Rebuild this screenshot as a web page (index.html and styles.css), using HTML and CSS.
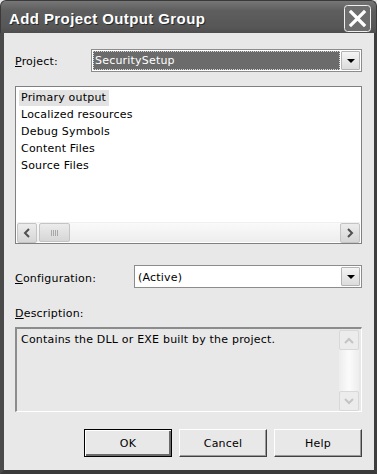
FILE: index.html
```html
<!DOCTYPE html>
<html lang="en">
<head>
    <meta charset="UTF-8">
    <title>Add Project Output Group</title>
    <link rel="stylesheet" href="styles.css">
</head>
<body>
    <div class="window">
        <!-- Заголовок окна -->
        <div class="titlebar">
            <span class="title">Add Project Output Group</span>
            <svg class="close" width="27" height="27" viewBox="0 0 27 27">
                <rect x="0.5" y="0.5" width="26" height="26" rx="3" fill="#6e6e6e" stroke="#f0f0f0"/>
                <path d="M7 7 L20 20 M20 7 L7 20" stroke="#fff" stroke-width="3.2" stroke-linecap="square"/>
            </svg>
        </div>

        <div class="frame">
            <!-- Проект -->
            <div class="row">
                <label class="lbl lbl-project"><u>P</u>roject:</label>
                <div class="combo combo-project">
                    <span class="combo-text selected">SecuritySetup</span>
                    <span class="drop"><span class="tri"></span></span>
                </div>
            </div>

            <!-- Список выходных групп -->
            <div class="listbox">
                <ul class="items">
                    <li><span class="hl">Primary output</span></li>
                    <li><span>Localized resources</span></li>
                    <li><span>Debug Symbols</span></li>
                    <li><span>Content Files</span></li>
                    <li><span>Source Files</span></li>
                </ul>
                <div class="hscroll">
                    <span class="sbtn">
                        <svg width="8" height="10" viewBox="0 0 8 10"><path d="M6 1 L2 5 L6 9" fill="none" stroke="#505050" stroke-width="2"/></svg>
                    </span>
                    <span class="thumb">
                        <svg width="7" height="6" viewBox="0 0 7 6"><path d="M0.5 0v6M2.5 0v6M4.5 0v6M6.5 0v6" stroke="#a8a8a8"/></svg>
                    </span>
                    <span class="track"></span>
                    <span class="sbtn">
                        <svg width="8" height="10" viewBox="0 0 8 10"><path d="M2 1 L6 5 L2 9" fill="none" stroke="#505050" stroke-width="2"/></svg>
                    </span>
                </div>
            </div>

            <!-- Конфигурация -->
            <div class="row row-config">
                <label class="lbl lbl-config"><u>C</u>onfiguration:</label>
                <div class="combo combo-config">
                    <span class="combo-text">(Active)</span>
                    <span class="drop"><span class="tri"></span></span>
                </div>
            </div>

            <!-- Описание -->
            <div class="lbl desc-label"><u>D</u>escription:</div>
            <div class="descbox">
                <div class="desc-text">Contains the DLL or EXE built by the project.</div>
                <div class="vscroll">
                    <span class="sbtn dis">
                        <svg width="10" height="7" viewBox="0 0 10 7"><path d="M1 6 L5 2 L9 6" fill="none" stroke="#c4c4c4" stroke-width="2"/></svg>
                    </span>
                    <span class="vtrack"></span>
                    <span class="sbtn dis">
                        <svg width="10" height="7" viewBox="0 0 10 7"><path d="M1 1 L5 5 L9 1" fill="none" stroke="#c4c4c4" stroke-width="2"/></svg>
                    </span>
                </div>
            </div>

            <!-- Кнопки -->
            <div class="buttons">
                <button class="btn default">OK</button>
                <button class="btn">Cancel</button>
                <button class="btn">Help</button>
            </div>
        </div>
    </div>
</body>
</html>
```
FILE: styles.css
```css
* {
    box-sizing: border-box;
}

body {
    margin: 0;
    background: #e8e8e8;
    font-family: "DejaVu Sans", sans-serif;
    font-size: 11px;
    letter-spacing: 0.2px;
    color: #000;
}

.window {
    width: 377px;
    height: 474px;
    display: flex;
    flex-direction: column;
}

.titlebar {
    height: 33px;
    display: flex;
    align-items: center;
    justify-content: space-between;
    padding: 0 5px 0 8px;
    background: linear-gradient(#767676, #5e5e5e 30%, #575757 80%, #4e4e4e);
    border-radius: 6px 6px 0 0;
    border: 1px solid #3a3a3a;
    border-bottom: none;
}

.title {
    font-family: "Liberation Sans", Arial, sans-serif;
    font-weight: bold;
    font-size: 15px;
    letter-spacing: 0.4px;
    color: #fff;
    text-shadow: 1px 1px 0 #2a2a2a;
    margin-top: 2px;
}

.close {
    display: block;
    margin-top: 2px;
}

.frame {
    flex: 1;
    display: flex;
    flex-direction: column;
    background: #e8e8e8;
    border-left: 4px solid #4a4a4a;
    border-right: 3px solid #3e3e3e;
    border-bottom: 4px solid #3a3a3a;
    padding: 16px 12px 0 11px;
}

.row {
    display: flex;
    align-items: center;
    height: 23px;
}

.lbl u {
    text-decoration: underline;
    text-underline-offset: 1px;
}

.lbl-project {
    width: 76px;
    padding-top: 2px;
}

.lbl-config {
    width: 119px;
    padding-top: 4px;
}

.combo {
    flex: 1;
    height: 23px;
    display: flex;
    align-items: center;
    background: #fff;
    border: 1px solid #8c8c8c;
    padding: 1px;
}

.combo-text {
    flex: 1;
    height: 19px;
    line-height: 19px;
    padding-left: 2px;
}

.combo-text.selected {
    background: #6b6b6b;
    color: #fff;
    outline: 1px dotted #d8d8d8;
    outline-offset: -1px;
    margin-right: 1px;
}

.combo-config .combo-text {
    padding-left: 2px;
    padding-top: 1px;
}

.drop {
    width: 19px;
    height: 19px;
    display: flex;
    align-items: center;
    justify-content: center;
    background: linear-gradient(#f4f4f4, #dcdcdc);
    border: 1px solid #b4b4b4;
    border-radius: 1px;
}

.tri {
    width: 0;
    height: 0;
    border-left: 4px solid transparent;
    border-right: 4px solid transparent;
    border-top: 4px solid #000;
    margin-top: 1px;
}

.listbox {
    margin-top: 14px;
    height: 158px;
    display: flex;
    flex-direction: column;
    background: #fff;
    border: 1px solid #808080;
    padding: 1px;
}

.items {
    flex: 1;
    list-style: none;
    margin: 0;
    padding: 1px 0 0 2px;
}

.items li {
    height: 17px;
    line-height: 17px;
}

.items span {
    display: inline-block;
    padding: 0 3px 0 2px;
    line-height: 16px;
}

.items .hl {
    background: #e2e2e2;
}

.hscroll {
    height: 20px;
    display: flex;
    background: linear-gradient(#fafafa, #ededed);
    border-top: 1px solid #f0f0f0;
}

.sbtn {
    width: 20px;
    height: 20px;
    display: flex;
    align-items: center;
    justify-content: center;
    background: linear-gradient(#ececec, #d6d6d6);
    border: 1px solid #c4c4c4;
    border-radius: 2px;
}

.sbtn svg,
.thumb svg {
    display: block;
}

.thumb {
    width: 31px;
    margin-left: 2px;
    display: flex;
    align-items: center;
    justify-content: center;
    background: linear-gradient(#ececec, #d6d6d6);
    border: 1px solid #c4c4c4;
    border-radius: 2px;
}

.track {
    flex: 1;
}

.row-config {
    margin-top: 21px;
}

.desc-label {
    margin-top: 19px;
    height: 14px;
    line-height: 14px;
}

.descbox {
    margin-top: 6px;
    height: 85px;
    display: flex;
    background: #e8e8e8;
    border-top: 2px solid #8c8c8c;
    border-left: 2px solid #8c8c8c;
    border-right: 1px solid #fff;
    border-bottom: 1px solid #fff;
    padding: 0 2px 0 0;
}

.desc-text {
    flex: 1;
    padding: 4px 0 0 4px;
}

.vscroll {
    width: 20px;
    display: flex;
    flex-direction: column;
    padding-top: 1px;
}

.vtrack {
    flex: 1;
    background: linear-gradient(90deg, #ededed, #fbfbfb 50%, #ededed);
}

.sbtn.dis {
    background: #ececec;
    border-color: #d8d8d8;
}

.buttons {
    margin-top: 17px;
    display: flex;
    justify-content: flex-end;
    gap: 7px;
}

.btn {
    width: 88px;
    height: 28px;
    font-family: "DejaVu Sans", sans-serif;
    font-size: 11px;
    letter-spacing: 0.2px;
    color: #000;
    background: #e8e8e8;
    border: 1px solid;
    border-color: #fff #404040 #404040 #fff;
    box-shadow: inset -1px -1px 0 #9a9a9a;
    padding: 0;
}

.btn.default {
    border: 1px solid #000;
    box-shadow: inset 1px 1px 0 #fff, inset -2px -2px 0 #6a6a6a;
}
```
